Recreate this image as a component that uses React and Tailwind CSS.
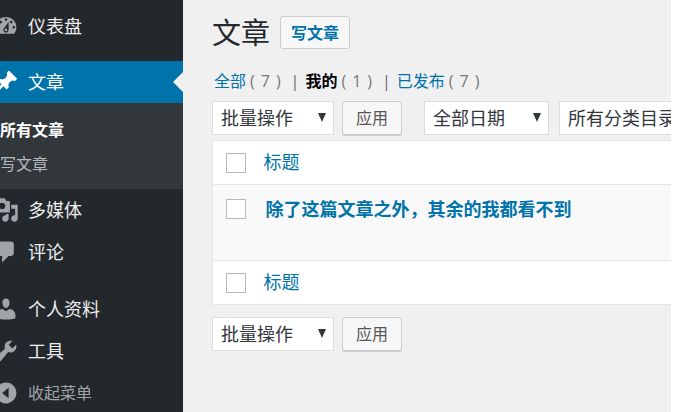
const menuIcons = {
  dashboard:
    "M3.76 16h12.48c1.1-1.37 1.76-3.11 1.76-5 0-4.42-3.58-8-8-8s-8 3.58-8 8c0 1.89.66 3.63 1.76 5zM10 4c.55 0 1 .45 1 1s-.45 1-1 1-1-.45-1-1 .45-1 1-1zM6 6c.55 0 1 .45 1 1s-.45 1-1 1-1-.45-1-1 .45-1 1-1zm8 0c.55 0 1 .45 1 1s-.45 1-1 1-1-.45-1-1 .45-1 1-1zm-5.37 5.55L12 7v6c0 1.1-.9 2-2 2s-2-.9-2-2c0-.57.24-1.08.63-1.45zM4 10c.55 0 1 .45 1 1s-.45 1-1 1-1-.45-1-1 .45-1 1-1zm12 0c.55 0 1 .45 1 1s-.45 1-1 1-1-.45-1-1 .45-1 1-1zm-5 3c0-.55-.45-1-1-1s-1 .45-1 1 .45 1 1 1 1-.45 1-1z",
  post: "M10.44 3.02l1.82-1.82 6.36 6.35-1.83 1.82c-1.05-.68-2.48-.57-3.41.36l-.75.75c-.92.93-1.04 2.35-.35 3.41l-1.83 1.82-2.41-2.41-2.8 2.79c-.42.42-3.38 2.71-3.8 2.29s1.86-3.39 2.28-3.81l2.79-2.79L4.1 9.36l1.83-1.82c1.05.69 2.48.57 3.4-.36l.75-.75c.93-.92 1.05-2.35.36-3.41z",
  media:
    "M13 11V4c0-.55-.45-1-1-1h-1.67L9 1H5L3.67 3H2c-.55 0-1 .45-1 1v7c0 .55.45 1 1 1h10c.55 0 1-.45 1-1zM7 4.5c1.38 0 2.5 1.12 2.5 2.5S8.38 9.5 7 9.5 4.5 8.38 4.5 7 5.62 4.5 7 4.5zM14 6h5v10.5c0 1.38-1.12 2.5-2.5 2.5S14 17.88 14 16.5s1.12-2.5 2.5-2.5c.17 0 .34.02.5.05V9h-3V6zm-4 8.05V13h2v3.5c0 1.38-1.12 2.5-2.5 2.5S7 17.88 7 16.5 8.12 14 9.5 14c.17 0 .34.02.5.05z",
  comments:
    "M5 2h9c1.1 0 2 .9 2 2v7c0 1.1-.9 2-2 2h-2l-5 5v-5H5c-1.1 0-2-.9-2-2V4c0-1.1.9-2 2-2z",
  user: "M10 9.25c-2.27 0-2.73-3.44-2.73-3.44C7 4.02 7.82 2 9.97 2c2.16 0 2.98 2.02 2.71 3.81 0 0-.41 3.44-2.68 3.44zm0 2.57L12.72 10c2.39 0 4.52 2.33 4.52 4.53v2.49s-3.65 1.13-7.24 1.13c-3.65 0-7.24-1.13-7.24-1.13v-2.49c0-2.25 1.94-4.48 4.47-4.48z",
  tools:
    "M16.68 9.77c-1.34 1.34-3.3 1.67-4.95.99l-5.41 6.52c-.99.99-2.59.99-3.58 0s-.99-2.59 0-3.57l6.52-5.42c-.68-1.65-.35-3.61.99-4.95 1.28-1.28 3.12-1.62 4.72-1.06l-2.89 2.89 2.82 2.82 2.86-2.87c.53 1.58.18 3.39-1.08 4.65z",
  collapse:
    "M10 2c4.42 0 8 3.58 8 8s-3.58 8-8 8-8-3.58-8-8 3.58-8 8-8zm2 12V6l-5 4z",
};

const posts = [{ id: 1, title: "除了这篇文章之外，其余的我都看不到" }];

function MenuIcon({ name }) {
  return (
    <svg
      viewBox="0 0 20 20"
      className="size-[26px] shrink-0 fill-current"
      fillRule="evenodd"
      aria-hidden="true"
    >
      <path d={menuIcons[name]} />
    </svg>
  );
}

function MenuItem({ icon, label }) {
  return (
    <li>
      <a href="#" className="flex h-[42px] items-center gap-[9px] text-lg text-[#eeeeee]">
        <span className="-ml-[7px] text-[#a0a5aa]">
          <MenuIcon name={icon} />
        </span>
        {label}
      </a>
    </li>
  );
}

function Sidebar() {
  return (
    <nav className="w-[183px] shrink-0 overflow-hidden bg-[#23282d] pt-[5px]">
      <ul>
        <MenuItem icon="dashboard" label="仪表盘" />
        <li className="mt-3.5">
          <a
            href="#"
            className="relative flex h-[42px] items-center gap-[9px] bg-[#0073aa] text-lg text-white"
          >
            <span className="-ml-[7px]">
              <MenuIcon name="post" />
            </span>
            文章
            <svg
              viewBox="0 0 10 20"
              className="absolute top-[11px] right-0 h-5 w-2.5 fill-[#f0f0f0]"
              aria-hidden="true"
            >
              <path d="M10 0v20L0 10z" />
            </svg>
          </a>
          <ul className="bg-[#32373c] pt-2.5 pb-2 text-base leading-[34px]">
            <li>
              <a href="#" className="font-bold text-white">
                所有文章
              </a>
            </li>
            <li>
              <a href="#" className="text-[#b4b9be]">
                写文章
              </a>
            </li>
          </ul>
        </li>
        <MenuItem icon="media" label="多媒体" />
        <MenuItem icon="comments" label="评论" />
      </ul>
      <ul className="mt-[15px]">
        <MenuItem icon="user" label="个人资料" />
        <MenuItem icon="tools" label="工具" />
        <li>
          <button
            type="button"
            className="flex h-[42px] items-center gap-[9px] text-base text-[#a0a5aa]"
          >
            <span className="-ml-[7px]">
              <MenuIcon name="collapse" />
            </span>
            收起菜单
          </button>
        </li>
      </ul>
    </nav>
  );
}

function Select({ label, option, className }) {
  return (
    <div className={`relative shrink-0 ${className}`}>
      <select
        aria-label={label}
        className="h-[34px] w-full appearance-none border border-[#dddddd] bg-white pl-2 text-lg leading-none text-[#32373c]"
      >
        <option>{option}</option>
      </select>
      <svg
        viewBox="0 0 10 9"
        className="pointer-events-none absolute top-3 right-[7px] h-[9px] w-2.5 fill-[#32373c]"
        aria-hidden="true"
      >
        <path d="M1 0h8L5 9z" />
      </svg>
    </div>
  );
}

function ApplyButton() {
  return (
    <button
      type="button"
      className="ml-2 h-[34px] w-[60px] shrink-0 rounded-[3px] border border-[#cccccc] bg-[#f7f7f7] text-base text-[#555555] shadow-[0_1px_0_#cccccc]"
    >
      应用
    </button>
  );
}

function Checkbox({ label }) {
  return (
    <input
      type="checkbox"
      aria-label={label}
      className="block size-5 appearance-none border border-[#b4b9be] bg-white"
    />
  );
}

function Count({ children }) {
  return (
    <span className="inline-flex gap-1.5 px-1 text-[#777777]">
      <span>(</span>
      <span>{children}</span>
      <span>)</span>
    </span>
  );
}

function HeadingRow() {
  return (
    <tr className="h-11 bg-white">
      <td className="w-[51px] pl-[13px]">
        <Checkbox label="全选" />
      </td>
      <th scope="col" className="text-left font-normal">
        <a href="#" className="text-lg leading-6 text-[#0073aa]">
          标题
        </a>
      </th>
    </tr>
  );
}

export default function App() {
  return (
    <div className="flex h-screen overflow-hidden bg-white pr-[5px] font-['Open_Sans','Noto_Sans_CJK_SC',sans-serif]">
      <Sidebar />
      <main className="min-w-0 flex-1 overflow-hidden bg-[#f0f0f0] pt-4 pl-[29px]">
        <div className="flex h-[33px] items-center gap-2.5">
          <h1 className="text-[29px] leading-8 text-[#23282d]">文章</h1>
          <a
            href="#"
            className="flex h-[33px] items-center rounded-[3px] border border-[#cccccc] bg-[#f7f7f7] px-2.5 text-base font-bold text-[#0073aa]"
          >
            写文章
          </a>
        </div>

        <ul className="mt-5 flex h-6 items-center pl-0.5 text-base whitespace-nowrap text-[#666666]">
          <li>
            <a href="#" className="text-[#0073aa]">
              全部
            </a>
            <Count>7</Count>
          </li>
          <li className="px-1.5">|</li>
          <li>
            <a href="#" className="font-bold text-black">
              我的
            </a>
            <Count>1</Count>
          </li>
          <li className="px-1.5">|</li>
          <li>
            <a href="#" className="text-[#0073aa]">
              已发布
            </a>
            <Count>7</Count>
          </li>
        </ul>

        <div className="mt-2 flex">
          <Select label="批量操作" option="批量操作" className="w-[122px]" />
          <ApplyButton />
          <Select label="按日期筛选" option="全部日期" className="ml-[22px] w-[125px]" />
          <Select label="按分类筛选" option="所有分类目录" className="ml-2.5 w-[170px]" />
        </div>

        <table className="mt-[5px] w-full border-collapse border-y border-l border-[#e5e5e5]">
          <thead>
            <HeadingRow />
          </thead>
          <tbody>
            {posts.map((post) => (
              <tr
                key={post.id}
                className="h-[76px] border-y border-[#e5e5e5] bg-[#f9f9f9] align-top"
              >
                <td className="pt-3.5 pl-[13px]">
                  <Checkbox label={post.title} />
                </td>
                <td className="pt-3 pl-0.5 whitespace-nowrap">
                  <a href="#" className="block text-lg leading-6 font-bold text-[#0073aa]">
                    {post.title}
                  </a>
                </td>
              </tr>
            ))}
          </tbody>
          <tfoot>
            <HeadingRow />
          </tfoot>
        </table>

        <div className="mt-3 flex">
          <Select label="批量操作" option="批量操作" className="w-[122px]" />
          <ApplyButton />
        </div>
      </main>
    </div>
  );
}
